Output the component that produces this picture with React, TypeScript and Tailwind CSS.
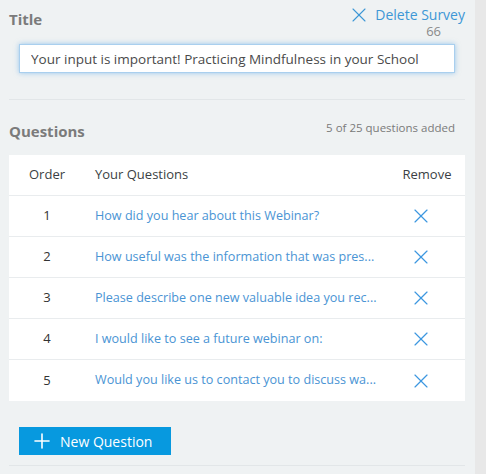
import { X, Plus } from 'lucide-react'

const questions = [
  'How did you hear about this Webinar?',
  'How useful was the information that was pres...',
  'Please describe one new valuable idea you rec...',
  'I would like to see a future webinar on:',
  'Would you like us to contact you to discuss wa...',
]

export default function App() {
  return (
    <div
      className="flex h-[474px] w-[486px] overflow-hidden"
      style={{ fontFamily: '"Open Sans", "Noto Sans", sans-serif' }}
    >
      <div className="w-[475px] bg-[#eff2f3] pl-[9px] pr-[10px]">
        <div className="flex h-[44px] items-start justify-between">
          <h2 className="mt-[9px] text-[15px] leading-[20px] font-bold text-[#7b7b7b]">Title</h2>
          <div className="mt-[6px] flex flex-col items-end">
            <button className="flex h-[18px] items-center gap-[4px] text-[14px] leading-[18px] text-[#3d97d6]">
              <X size={24} strokeWidth={1.1} className="-my-[3px] -ml-[2px]" />
              Delete Survey
            </button>
            <span className="pr-[24px] text-[13px] leading-[14px] text-[#8a8a8a]">66</span>
          </div>
        </div>

        <div className="ml-[10px] w-[436px]">
          <input
            type="text"
            defaultValue="Your input is important! Practicing Mindfulness in your School"
            className="h-[29px] w-full border border-[#a9cfee] bg-white px-[11px] text-[13.5px] text-[#4a4a4a] shadow-[0_0_5px_rgba(80,160,230,0.55)] outline-none"
          />
        </div>

        <div className="mt-[26px] h-px bg-[#e2e6e8]" />

        <div className="mt-[21px] flex items-center justify-between pr-[10px]">
          <h2 className="text-[15px] leading-[20px] font-bold text-[#7b7b7b]">Questions</h2>
          <span className="-mt-[6px] text-[11.5px] text-[#7a7a7a]">5 of 25 questions added</span>
        </div>

        <div className="mt-[14px] bg-white text-[13px]">
          <div className="flex h-[41px] items-center border-b border-[#e9ecee] text-[#3b3f44]">
            <span className="w-[76px] text-center">Order</span>
            <span className="flex-1 pl-[10px]">Your Questions</span>
            <span className="w-[76px] text-center">Remove</span>
          </div>
          {questions.map((q, i) => (
            <div
              key={i}
              className={`flex h-[41px] items-center ${i < questions.length - 1 ? 'border-b border-[#e9ecee]' : ''}`}
            >
              <span className="w-[76px] text-center text-[#333]">{i + 1}</span>
              <span className="flex-1 pl-[10px] text-[12.6px] text-[#4a94d4]">{q}</span>
              <span className="flex w-[76px] justify-center pr-[12px]">
                <X size={24} strokeWidth={1.15} className="text-[#3d97e0]" />
              </span>
            </div>
          ))}
        </div>

        <button className="ml-[10px] mt-[26px] flex h-[28px] w-[152px] items-center gap-[6px] bg-[#0799df] pl-[11px] text-[14px] font-medium text-white">
          <Plus size={24} strokeWidth={1.6} />
          New Question
        </button>

        <div className="mt-[10px] h-px bg-[#e2e6e8]" />
      </div>
      <div className="flex-1 bg-[#e8e8e8]" />
    </div>
  )
}
